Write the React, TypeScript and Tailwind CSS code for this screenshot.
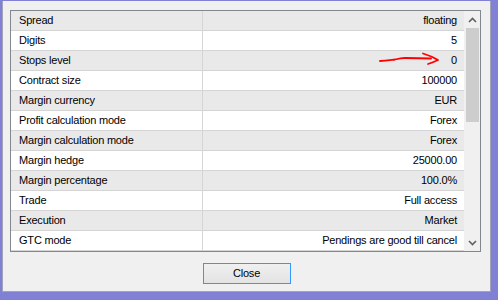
import React from "react";

const rows: [string, string][] = [
  ["Spread", "floating"],
  ["Digits", "5"],
  ["Stops level", "0"],
  ["Contract size", "100000"],
  ["Margin currency", "EUR"],
  ["Profit calculation mode", "Forex"],
  ["Margin calculation mode", "Forex"],
  ["Margin hedge", "25000.00"],
  ["Margin percentage", "100.0%"],
  ["Trade", "Full access"],
  ["Execution", "Market"],
  ["GTC mode", "Pendings are good till cancel"],
];

export default function App() {
  return (
    <div
      className="w-[498px] h-[300px] bg-[#8080d4] pl-[2px] pt-[1px] pr-[7px] pb-[8px] flex text-[11px] tracking-[-0.2px] text-black"
      style={{ fontFamily: '"Liberation Sans", Arial, sans-serif' }}
    >
      <div className="flex-1 bg-[#f0f0f0] border-l border-r border-b border-[#a3a3b8] flex flex-col">
        <div className="mt-[9px] ml-[7px] w-[471px] h-[242px] border border-[#828790] bg-white flex">
          <div className="flex-1 flex flex-col relative">
            {rows.map(([label, value], i) => (
              <div
                key={label}
                className={`h-[20px] flex border-b border-[#d5d5d5] ${
                  i % 2 === 0 ? "bg-[#e9e9e9]" : "bg-white"
                }`}
              >
                <div className="w-[192px] pl-[8px] flex items-center border-r border-[#d5d5d5]">
                  {label}
                </div>
                <div className="flex-1 pr-[7px] flex items-center justify-end">
                  {value}
                </div>
              </div>
            ))}
            <svg
              className="absolute left-0 top-0 pointer-events-none"
              width="452"
              height="100"
              viewBox="11 11 452 100"
            >
              <path
                d="M380 61 C386 61 391 60 395 59.5 C399 58.5 401 58 405 58 L431 58.5"
                stroke="#ff0000"
                strokeWidth="1.8"
                fill="none"
                strokeLinecap="round"
              />
              <path
                d="M423 53.5 C428 55 433 57 438 60 C434 62 431 63 428 64"
                stroke="#ff0000"
                strokeWidth="1.8"
                fill="none"
                strokeLinecap="round"
                strokeLinejoin="round"
              />
            </svg>
          </div>
          <div className="w-[16px] bg-[#f0f0f0] flex flex-col items-center">
            <div className="h-[17px] flex items-center justify-center">
              <svg width="9" height="6" viewBox="0 0 9 6">
                <path d="M1 5 L4.5 1.5 L8 5" stroke="#606060" strokeWidth="1.6" fill="none" />
              </svg>
            </div>
            <div className="w-[13px] h-[94px] bg-[#cdcdcd]" />
            <div className="flex-1" />
            <div className="h-[17px] flex items-center justify-center">
              <svg width="9" height="6" viewBox="0 0 9 6">
                <path d="M1 1 L4.5 4.5 L8 1" stroke="#606060" strokeWidth="1.6" fill="none" />
              </svg>
            </div>
          </div>
        </div>
        <div className="flex justify-center mt-[11px]">
          <button className="w-[88px] h-[21px] border border-[#3399ff] bg-gradient-to-b from-[#f0f0f0] to-[#e3e3e3] flex items-center justify-center text-[11px]">
            Close
          </button>
        </div>
      </div>
    </div>
  );
}
